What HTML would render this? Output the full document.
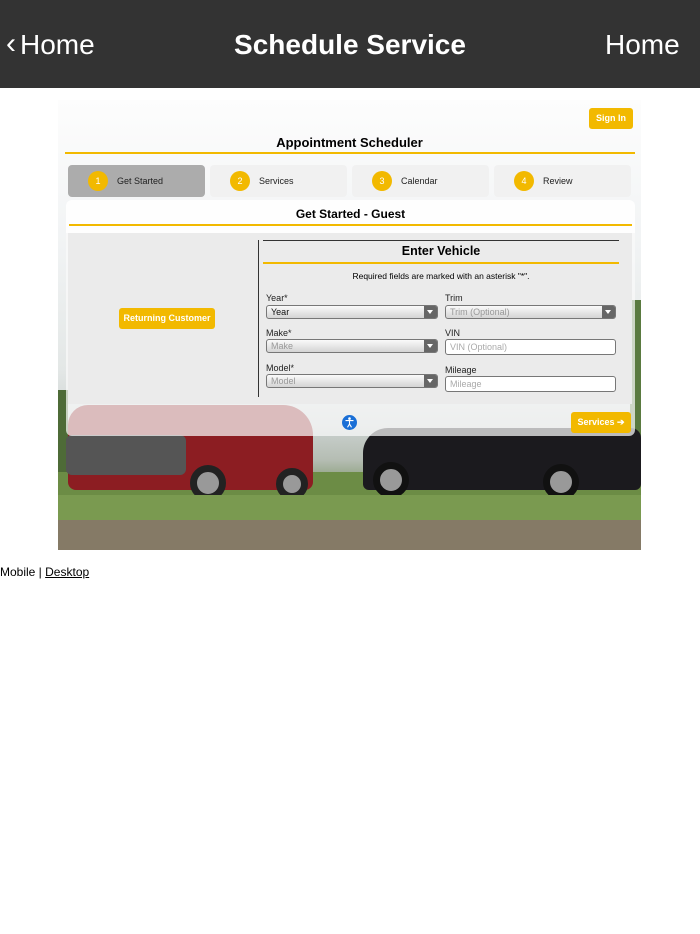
<!DOCTYPE html>
<html><head><meta charset="utf-8"><style>
*{box-sizing:border-box;margin:0;padding:0}
body{width:700px;height:934px;background:#fff;font-family:"Liberation Sans",Arial,sans-serif;position:relative;overflow:hidden}
.a{position:absolute}
.hdr{left:0;top:0;width:700px;height:88px;background:#333;color:#fff;font-size:28px}
.y{background:#f2b900;color:#fff;font-weight:bold;font-size:9px;border-radius:3px;text-align:center}
.tab{top:165px;height:32px;width:137px;border-radius:4px;background:rgba(240,240,240,.85);font-size:9px;color:#222}
.tab .c{position:absolute;left:20px;top:6px;width:20px;height:20px;border-radius:50%;background:#f2b900;color:#fff;text-align:center;line-height:20px;font-size:9px}
.tab span{position:absolute;left:49px;top:11px}
.lbl{font-size:9px;color:#222}
.sel{height:14px;border:1px solid #777;border-radius:3px;background:linear-gradient(#fafafa,#d4d4d4);font-size:9px;padding-left:4px;line-height:12px;color:#999}
.sel:after{content:"";position:absolute;right:0;top:0;width:13px;height:12px;background:#666;border-radius:0 2px 2px 0}
.sel i{position:absolute;right:4px;top:4px;width:0;height:0;border-left:3px solid transparent;border-right:3px solid transparent;border-top:4px solid #fff;z-index:2}
.inp{height:16px;border:1px solid #777;border-radius:3px;background:#fff;font-size:9px;padding-left:4px;line-height:14px;color:#aaa}
</style></head><body>
<div class="a hdr">
<div class="a" style="left:6px;top:29px;font-size:30px;line-height:30px">‹</div>
<div class="a" style="left:20px;top:28px;line-height:34px">Home</div>
<div class="a" style="left:0;width:700px;text-align:center;top:28px;line-height:34px;font-weight:bold">Schedule Service</div>
<div class="a" style="left:605px;top:28px;line-height:34px">Home</div>
</div>
<div class="a" style="left:58px;top:100px;width:583px;height:450px;background:linear-gradient(#fdfdfd 0%,#f2f4f5 30%,#e3e7e6 60%,#cdd3d2 72%,#b5bdb3 80%,#6f8a55 88%,#7d7560 95%,#8a8070 100%);overflow:hidden">
<div class="a" style="left:0;top:290px;width:10px;height:130px;background:#4e6b37"></div>
<div class="a" style="left:572px;top:200px;width:11px;height:200px;background:#5a7a40"></div>
<div class="a" style="left:0;top:372px;width:583px;height:50px;background:#6c8c45"></div>
<div class="a" style="left:10px;top:305px;width:245px;height:85px;background:#8c1d22;border-radius:20px 30px 8px 8px"></div>
<div class="a" style="left:8px;top:335px;width:120px;height:40px;background:#555;border-radius:6px"></div>
<div class="a" style="left:132px;top:365px;width:36px;height:36px;background:#999;border-radius:50%;border:7px solid #222"></div>
<div class="a" style="left:218px;top:368px;width:32px;height:32px;background:#999;border-radius:50%;border:7px solid #222"></div>
<div class="a" style="left:305px;top:328px;width:278px;height:62px;background:#1b1a1e;border-radius:25px 10px 6px 6px"></div>
<div class="a" style="left:315px;top:362px;width:36px;height:36px;background:#999;border-radius:50%;border:7px solid #111"></div>
<div class="a" style="left:485px;top:364px;width:36px;height:36px;background:#999;border-radius:50%;border:7px solid #111"></div>
<div class="a" style="left:0;top:395px;width:583px;height:28px;background:#7a9a50"></div>
<div class="a" style="left:0;top:420px;width:583px;height:30px;background:#857a66"></div>
</div>
<div class="a y" style="left:589px;top:108px;width:44px;height:21px;line-height:21px">Sign In</div>
<div class="a" style="left:58px;width:583px;top:135px;text-align:center;font-weight:bold;font-size:13px">Appointment Scheduler</div>
<div class="a" style="left:65px;top:152px;width:570px;height:2px;background:#f2b900"></div>
<div class="a tab" style="left:68px;background:#acacac"><div class="c">1</div><span>Get Started</span></div>
<div class="a tab" style="left:210px"><div class="c">2</div><span>Services</span></div>
<div class="a tab" style="left:352px"><div class="c">3</div><span>Calendar</span></div>
<div class="a tab" style="left:494px"><div class="c">4</div><span>Review</span></div>
<div class="a" style="left:66px;top:200px;width:569px;height:236px;background:rgba(250,250,250,.72);border-radius:6px"></div>
<div class="a" style="left:66px;top:200px;width:569px;height:33px;background:rgba(255,255,255,.85);border-radius:6px 6px 0 0"></div>
<div class="a" style="left:66px;width:569px;top:207px;text-align:center;font-weight:bold;font-size:12px">Get Started - Guest</div>
<div class="a" style="left:69px;top:224px;width:563px;height:2px;background:#f2b900"></div>
<div class="a" style="left:68px;top:233px;width:564px;height:171px;background:#ebebeb"></div>
<div class="a y" style="left:119px;top:308px;width:96px;height:21px;line-height:21px">Returning Customer</div>
<div class="a" style="left:258px;top:240px;width:1px;height:157px;background:#333"></div>
<div class="a" style="left:263px;top:240px;width:356px;height:1px;background:#333"></div>
<div class="a" style="left:263px;width:356px;top:244px;text-align:center;font-weight:bold;font-size:12.5px">Enter Vehicle</div>
<div class="a" style="left:263px;top:262px;width:356px;height:2px;background:#f2b900"></div>
<div class="a" style="left:263px;width:356px;top:271px;text-align:center;font-size:8.5px">Required fields are marked with an asterisk "*".</div>
<div class="a lbl" style="left:266px;top:293px">Year*</div>
<div class="a sel" style="left:266px;top:305px;width:172px;color:#111">Year<i></i></div>
<div class="a lbl" style="left:445px;top:293px">Trim</div>
<div class="a sel" style="left:445px;top:305px;width:171px">Trim (Optional)<i></i></div>
<div class="a lbl" style="left:266px;top:328px">Make*</div>
<div class="a sel" style="left:266px;top:339px;width:172px">Make<i></i></div>
<div class="a lbl" style="left:445px;top:328px">VIN</div>
<div class="a inp" style="left:445px;top:339px;width:171px">VIN (Optional)</div>
<div class="a lbl" style="left:266px;top:363px">Model*</div>
<div class="a sel" style="left:266px;top:374px;width:172px">Model<i></i></div>
<div class="a lbl" style="left:445px;top:365px">Mileage</div>
<div class="a inp" style="left:445px;top:376px;width:171px">Mileage</div>
<svg class="a" style="left:342px;top:415px" width="15" height="15" viewBox="0 0 15 15"><circle cx="7.5" cy="7.5" r="7.5" fill="#1a6fd6"/><circle cx="7.5" cy="3.6" r="1.3" fill="#fff"/><path d="M3.5 5.6h8M7.5 5.6v3.4M7.5 9l-2 3.3M7.5 9l2 3.3" stroke="#fff" stroke-width="1.1" fill="none"/></svg>
<div class="a y" style="left:571px;top:412px;width:60px;height:21px;line-height:21px">Services ➔</div>
<div class="a" style="left:0;top:565px;font-size:12px">Mobile | <u>Desktop</u></div>
</body></html>
